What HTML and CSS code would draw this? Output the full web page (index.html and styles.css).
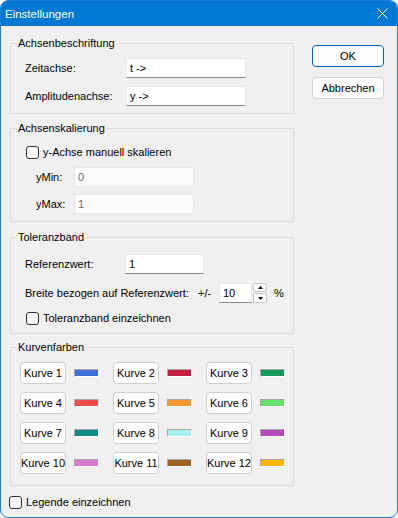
FILE: index.html
```html
<!DOCTYPE html>
<html lang="de">
<head>
    <meta charset="UTF-8">
    <title>Einstellungen</title>
    <link rel="stylesheet" href="styles.css">
</head>
<body>
    <div class="window">
        <div class="titlebar">
            <span class="title">Einstellungen</span>
            <svg class="close" width="11" height="11" viewBox="0 0 11 11">
                <path d="M0.5 0.5 L10.5 10.5 M10.5 0.5 L0.5 10.5" stroke="#fff" stroke-width="1" fill="none"/>
            </svg>
        </div>

        <div class="content">
            <div class="main">
                <!-- Achsenbeschriftung -->
                <fieldset class="group group-labels">
                    <legend>Achsenbeschriftung</legend>
                    <div class="rows rows-labels">
                        <div class="field">
                            <label class="lbl lbl-axis">Zeitachse:</label>
                            <input class="textbox tb-axis" type="text" value="t ->">
                        </div>
                        <div class="field">
                            <label class="lbl lbl-axis">Amplitudenachse:</label>
                            <input class="textbox tb-axis" type="text" value="y ->">
                        </div>
                    </div>
                </fieldset>

                <!-- Achsenskalierung -->
                <fieldset class="group group-scale">
                    <legend>Achsenskalierung</legend>
                    <div class="rows rows-scale">
                        <div class="check"><span class="box"></span><span>y-Achse manuell skalieren</span></div>
                        <div class="field indent">
                            <label class="lbl lbl-scale">yMin:</label>
                            <input class="textbox tb-scale disabled" type="text" value="0" disabled>
                        </div>
                        <div class="field indent">
                            <label class="lbl lbl-scale">yMax:</label>
                            <input class="textbox tb-scale disabled" type="text" value="1" disabled>
                        </div>
                    </div>
                </fieldset>

                <!-- Toleranzband -->
                <fieldset class="group group-tol">
                    <legend>Toleranzband</legend>
                    <div class="rows rows-tol">
                        <div class="field">
                            <label class="lbl lbl-ref">Referenzwert:</label>
                            <input class="textbox tb-ref" type="text" value="1">
                        </div>
                        <div class="field field-spaced">
                            <label class="lbl lbl-width">Breite bezogen auf Referenzwert:</label>
                            <span class="plusminus">+/-</span>
                            <input class="textbox tb-spin" type="text" value="10">
                            <div class="spin">
                                <span class="spin-btn spin-up">
                                    <svg width="5" height="3" viewBox="0 0 5 3"><path d="M0 3 L2.5 0 L5 3 Z" fill="#000"/></svg>
                                </span>
                                <span class="spin-btn spin-down">
                                    <svg width="5" height="3" viewBox="0 0 5 3"><path d="M0 0 L2.5 3 L5 0 Z" fill="#000"/></svg>
                                </span>
                            </div>
                            <span class="percent">%</span>
                        </div>
                        <div class="check check-tol"><span class="box"></span><span>Toleranzband einzeichnen</span></div>
                    </div>
                </fieldset>

                <!-- Kurvenfarben -->
                <fieldset class="group group-colors">
                    <legend>Kurvenfarben</legend>
                    <div class="curves">
                        <div class="curve"><button class="curve-btn">Kurve 1</button><span class="swatch c1"></span></div>
                        <div class="curve"><button class="curve-btn">Kurve 2</button><span class="swatch c2"></span></div>
                        <div class="curve"><button class="curve-btn">Kurve 3</button><span class="swatch c3"></span></div>
                        <div class="curve"><button class="curve-btn">Kurve 4</button><span class="swatch c4"></span></div>
                        <div class="curve"><button class="curve-btn">Kurve 5</button><span class="swatch c5"></span></div>
                        <div class="curve"><button class="curve-btn">Kurve 6</button><span class="swatch c6"></span></div>
                        <div class="curve"><button class="curve-btn">Kurve 7</button><span class="swatch c7"></span></div>
                        <div class="curve"><button class="curve-btn">Kurve 8</button><span class="swatch c8"></span></div>
                        <div class="curve"><button class="curve-btn">Kurve 9</button><span class="swatch c9"></span></div>
                        <div class="curve"><button class="curve-btn">Kurve 10</button><span class="swatch c10"></span></div>
                        <div class="curve"><button class="curve-btn">Kurve 11</button><span class="swatch c11"></span></div>
                        <div class="curve"><button class="curve-btn">Kurve 12</button><span class="swatch c12"></span></div>
                    </div>
                </fieldset>

                <div class="check check-legend"><span class="box"></span><span>Legende einzeichnen</span></div>
            </div>

            <div class="actions">
                <button class="btn btn-default">OK</button>
                <button class="btn">Abbrechen</button>
            </div>
        </div>
    </div>
</body>
</html>
```

FILE: styles.css
```css
body, html {
    margin: 0;
    padding: 0;
    background: #ffffff;
}

body {
    font-family: "Liberation Sans", Arial, sans-serif;
    font-size: 11px;
    color: #000000;
}

.window {
    width: 398px;
    height: 518px;
    box-sizing: border-box;
    border: 1px solid #1b7fd3;
    border-radius: 8px;
    background: #f0f0f0;
    overflow: hidden;
    display: flex;
    flex-direction: column;
}

/* Titelleiste */
.titlebar {
    flex: none;
    height: 25px;
    background: #0078d4;
    color: #ffffff;
    display: flex;
    align-items: center;
    justify-content: space-between;
    padding: 0 9px 0 4px;
}

.title {
    font-size: 11.5px;
}

.content {
    display: flex;
    gap: 18px;
    padding: 0 13px 0 9px;
}

.main {
    width: 284px;
    display: flex;
    flex-direction: column;
}

.actions {
    width: 72px;
    display: flex;
    flex-direction: column;
    gap: 10px;
    padding-top: 19px;
}

/* Gruppenrahmen */
.group {
    margin: 0;
    padding: 0;
    min-width: 0;
    border: 1px solid #dcdcdc;
}

.group legend {
    margin-left: 6px;
    padding: 0 1px;
    line-height: 14px;
}

.group-labels { margin-top: 10px; }
.group-scale  { margin-top: 7px; }
.group-tol    { margin-top: 8px; }
.group-colors { margin-top: 6px; }

.rows {
    display: flex;
    flex-direction: column;
}

.rows-labels {
    gap: 8px;
    padding: 8px 0 7px 14px;
}

.rows-scale {
    gap: 7px;
    padding: 9px 0 7px 15px;
}

.rows-tol {
    gap: 7px;
    padding: 10px 0 7px 14px;
}

.field {
    display: flex;
    align-items: center;
    height: 20px;
}

.field-spaced {
    margin-top: 2px;
}

.indent {
    padding-left: 10px;
}

.lbl {
    flex: none;
    white-space: nowrap;
}

.lbl-axis  { width: 101px; }
.lbl-scale { width: 38px; }
.lbl-ref   { width: 100px; }
.lbl-width { width: 173px; }

.plusminus {
    width: 21px;
    flex: none;
}

.percent {
    margin-left: 7px;
}

/* Textfelder */
.textbox {
    box-sizing: border-box;
    height: 20px;
    margin: 0;
    padding: 0 3px;
    border: 1px solid #e8e8e8;
    border-bottom-color: #8a8a8a;
    background: #ffffff;
    font: inherit;
    color: #000000;
    outline: none;
}

.textbox.disabled {
    border-color: #e6e6e6;
    background: #fbfbfb;
    color: #6d6d6d;
}

.tb-axis  { width: 120px; }
.tb-scale { width: 120px; }
.tb-ref   { width: 79px; }
.tb-spin  { width: 33px; }

.spin {
    display: flex;
    flex-direction: column;
    gap: 1px;
    width: 14px;
    margin-left: 1px;
}

.spin-btn {
    box-sizing: border-box;
    display: flex;
    align-items: center;
    justify-content: center;
    border: 1px solid #c8c8c8;
    border-radius: 2px;
    background: #fafafa;
}

.spin-up   { height: 9px; }
.spin-down { height: 10px; }

/* Kontrollkästchen */
.check {
    display: flex;
    align-items: center;
    gap: 4px;
    height: 16px;
    white-space: nowrap;
}

.check-tol {
    padding-left: 1px;
}

.check-legend {
    margin: 8px 0 0 -1px;
}

.box {
    width: 13px;
    height: 13px;
    box-sizing: border-box;
    border: 1px solid #333333;
    border-radius: 3px;
    background: #f9f9f9;
}

/* Kurvenfarben */
.curves {
    display: grid;
    grid-template-columns: repeat(3, auto);
    justify-content: start;
    column-gap: 14px;
    row-gap: 8px;
    padding: 8px 0 11px 9px;
}

.curve {
    display: flex;
    align-items: center;
    gap: 8px;
}

.curve-btn {
    width: 46px;
    height: 22px;
    box-sizing: border-box;
    padding: 0;
    border: 1px solid #d0d0d0;
    border-radius: 4px;
    background: #fdfdfd;
    font: inherit;
    color: #000000;
    white-space: nowrap;
}

.swatch {
    width: 25px;
    height: 8px;
    box-sizing: border-box;
    border: 1px solid #ffffff;
    border-top-color: #a8a8a8;
    border-left-color: #a8a8a8;
}

.c1  { background: #3f6fd6; }
.c2  { background: #c01e3c; }
.c3  { background: #139a5a; }
.c4  { background: #f04a4a; }
.c5  { background: #ee9a30; }
.c6  { background: #66e066; }
.c7  { background: #0f8a84; }
.c8  { background: #a8f0f0; }
.c9  { background: #b448b8; }
.c10 { background: #d67ad0; }
.c11 { background: #9c6420; }
.c12 { background: #ffb400; }

/* Schaltflächen */
.btn {
    height: 22px;
    box-sizing: border-box;
    padding: 0;
    border: 1px solid #d0d0d0;
    border-radius: 4px;
    background: #fdfdfd;
    font: inherit;
    color: #000000;
}

.btn-default {
    border-color: #0067c0;
}
```
